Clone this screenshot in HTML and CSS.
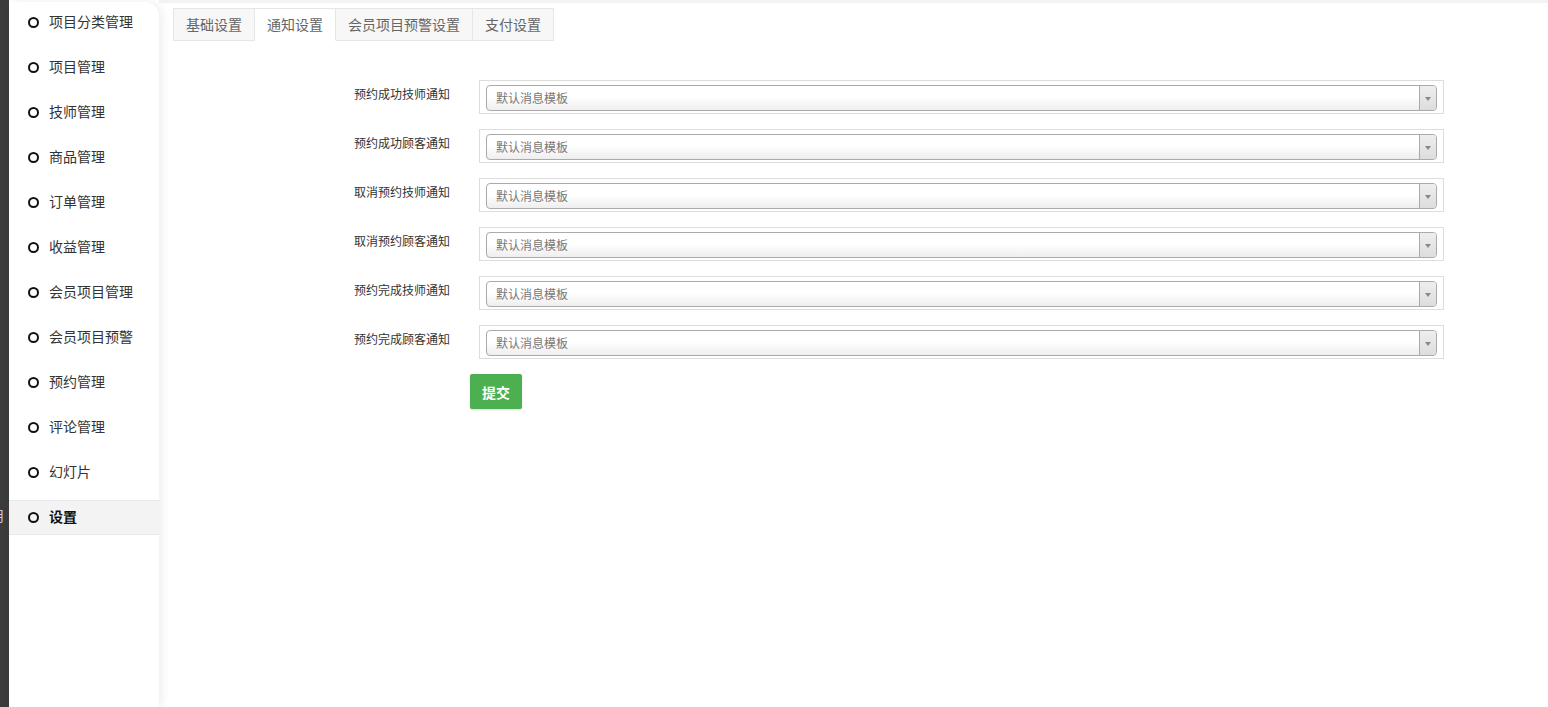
FILE: index.html
```html
<!DOCTYPE html>
<html lang="zh-CN">
<head>
    <meta charset="UTF-8">
    <title>设置</title>
    <link rel="stylesheet" href="styles.css">
</head>
<body>
    <div class="edge"><span class="edge-text">用</span></div>

    <div class="sidebar">
        <ul class="menu">
            <li class="menu-item"><i class="dot"></i>项目分类管理</li>
            <li class="menu-item"><i class="dot"></i>项目管理</li>
            <li class="menu-item"><i class="dot"></i>技师管理</li>
            <li class="menu-item"><i class="dot"></i>商品管理</li>
            <li class="menu-item"><i class="dot"></i>订单管理</li>
            <li class="menu-item"><i class="dot"></i>收益管理</li>
            <li class="menu-item"><i class="dot"></i>会员项目管理</li>
            <li class="menu-item"><i class="dot"></i>会员项目预警</li>
            <li class="menu-item"><i class="dot"></i>预约管理</li>
            <li class="menu-item"><i class="dot"></i>评论管理</li>
            <li class="menu-item"><i class="dot"></i>幻灯片</li>
            <li class="menu-item active"><i class="dot"></i>设置</li>
        </ul>
    </div>

    <div class="main">
        <ul class="tabs">
            <li class="tab">基础设置</li>
            <li class="tab active">通知设置</li>
            <li class="tab">会员项目预警设置</li>
            <li class="tab">支付设置</li>
        </ul>

        <form class="notice-form">
            <div class="form-row">
                <label class="form-label">预约成功技师通知</label>
                <div class="select-box"><div class="select"><span>默认消息模板</span><b class="arrow"></b></div></div>
            </div>
            <div class="form-row">
                <label class="form-label">预约成功顾客通知</label>
                <div class="select-box"><div class="select"><span>默认消息模板</span><b class="arrow"></b></div></div>
            </div>
            <div class="form-row">
                <label class="form-label">取消预约技师通知</label>
                <div class="select-box"><div class="select"><span>默认消息模板</span><b class="arrow"></b></div></div>
            </div>
            <div class="form-row">
                <label class="form-label">取消预约顾客通知</label>
                <div class="select-box"><div class="select"><span>默认消息模板</span><b class="arrow"></b></div></div>
            </div>
            <div class="form-row">
                <label class="form-label">预约完成技师通知</label>
                <div class="select-box"><div class="select"><span>默认消息模板</span><b class="arrow"></b></div></div>
            </div>
            <div class="form-row">
                <label class="form-label">预约完成顾客通知</label>
                <div class="select-box"><div class="select"><span>默认消息模板</span><b class="arrow"></b></div></div>
            </div>
            <button type="button" class="submit-btn">提交</button>
        </form>
    </div>
</body>
</html>
```

FILE: styles.css
```css
html, body {
    height: 100%;
}
body {
    margin: 0;
    display: flex;
    font-family: "Noto Sans CJK SC", "Liberation Sans", sans-serif;
    background-color: #fff;
    overflow: hidden;
}
.edge {
    width: 9px;
    flex-shrink: 0;
    background-color: #3b3b3b;
    position: relative;
    overflow: hidden;
}
.edge-text {
    position: absolute;
    right: 5px;
    top: 506px;
    font-size: 14px;
    line-height: 18px;
    color: #c9c8ee;
}
.sidebar {
    width: 150px;
    flex-shrink: 0;
    margin-top: 2px;
    background-color: #fff;
    border-top-right-radius: 14px;
    box-shadow: 3px 0 10px rgba(0,0,0,0.07);
    position: relative;
    z-index: 1;
}
.menu {
    list-style: none;
    margin: 0;
    padding: 3px 0 0;
}
.menu-item {
    display: flex;
    align-items: center;
    height: 35px;
    margin-bottom: 10px;
    padding: 0 0 4px 19px;
    font-size: 14px;
    color: #333;
    box-sizing: border-box;
}
.menu-item.active {
    background-color: #f3f3f3;
    border-top: 1px solid #e8e8f0;
    border-bottom: 1px solid #e8e8f0;
    font-weight: bold;
    color: #111;
}
.dot {
    width: 7px;
    height: 7px;
    border: 2px solid #111;
    border-radius: 50%;
    margin: 4px 10px 0 0;
}
.main {
    flex: 1;
    border-top: 3px solid #f3f3f3;
    padding: 5px 104px 0 14px;
}
.tabs {
    list-style: none;
    margin: 0;
    padding: 0;
    display: flex;
}
.tab {
    box-sizing: border-box;
    height: 33px;
    line-height: 30px;
    padding: 0 12px 2px;
    font-size: 14px;
    color: #666;
    background-color: #f7f7f7;
    border: 1px solid #e6e6e6;
    border-left: none;
}
.tab:first-child {
    border-left: 1px solid #e6e6e6;
}
.tab.active {
    background-color: #fff;
    border-bottom-color: #fff;
}
.notice-form {
    margin-top: 39px;
}
.form-row {
    display: flex;
    margin-bottom: 15px;
}
.form-label {
    width: 277px;
    margin-right: 29px;
    padding-top: 5px;
    text-align: right;
    font-size: 12px;
    line-height: 18px;
    color: #333;
}
.select-box {
    flex: 1;
    border: 1px solid #ddd;
    padding: 4px 6px 2px;
}
.select {
    display: flex;
    height: 24px;
    border: 1px solid #aaa;
    border-radius: 4px;
    background: linear-gradient(to bottom, #fff 0%, #fff 45%, #eee 100%);
    font-size: 12px;
    line-height: 24px;
    color: #777;
    overflow: hidden;
}
.select span {
    flex: 1;
    padding-left: 9px;
}
.arrow {
    width: 16px;
    border-left: 1px solid #aaa;
    background: linear-gradient(to bottom, #eee 0%, #ddd 100%);
    position: relative;
}
.arrow::after {
    content: "";
    position: absolute;
    left: 5px;
    top: 11px;
    border-left: 3px solid transparent;
    border-right: 3px solid transparent;
    border-top: 4px solid #888;
}
.submit-btn {
    margin-left: 297px;
    width: 52px;
    height: 35px;
    border: none;
    border-radius: 2px;
    background-color: #4caf50;
    color: #fff;
    font-family: inherit;
    font-size: 14px;
    font-weight: bold;
    box-shadow: 0 1px 2px rgba(0,0,0,0.15);
    cursor: pointer;
}
```
